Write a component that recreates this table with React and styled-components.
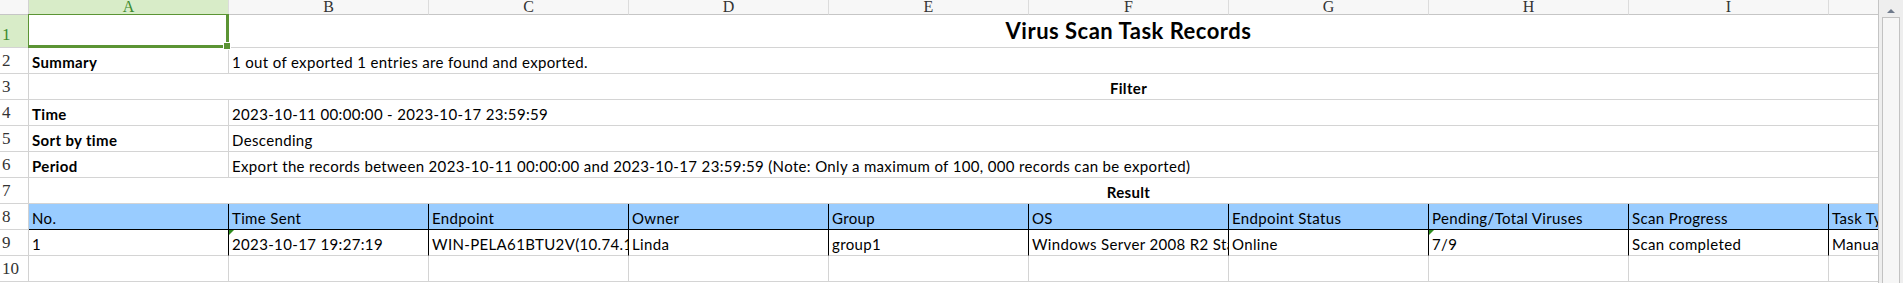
import styled, { createGlobalStyle, css } from "styled-components";

const columns = ["A", "B", "C", "D", "E", "F", "G", "H", "I", "J", "K"];

const resultHead = [
  "No.",
  "Time Sent",
  "Endpoint",
  "Owner",
  "Group",
  "OS",
  "Endpoint Status",
  "Pending/Total Viruses",
  "Scan Progress",
  "Task Type",
  "Operator",
];

const resultRow = [
  { text: "1" },
  { text: "2023-10-17 19:27:19", marker: true },
  { text: "WIN-PELA61BTU2V(10.74.102.36)" },
  { text: "Linda" },
  { text: "group1" },
  { text: "Windows Server 2008 R2 Standard" },
  { text: "Online" },
  { text: "7/9", marker: true },
  { text: "Scan completed" },
  { text: "Manual scan" },
  { text: "" },
];

const filters = [
  { row: 4, label: "Time", value: "2023-10-11 00:00:00 - 2023-10-17 23:59:59" },
  { row: 5, label: "Sort by time", value: "Descending" },
  {
    row: 6,
    label: "Period",
    value:
      "Export the records between 2023-10-11 00:00:00 and 2023-10-17 23:59:59 (Note: Only a maximum of 100, 000 records can be exported)",
  },
];

const GlobalStyle = createGlobalStyle`
  html, body {
    margin: 0;
    padding: 0;
    background: #ffffff;
    overflow: hidden;
  }
`;

const Window = styled.div`
  display: flex;
  width: 1903px;
  height: 283px;
  overflow: hidden;
`;

const SheetArea = styled.div`
  flex: 1;
  min-width: 0;
  overflow: hidden;
  position: relative;
`;

const Grid = styled.div`
  display: grid;
  grid-template-columns: 29px repeat(11, 200px);
  grid-template-rows: 15px 33px repeat(10, 26px);
  width: max-content;
  position: relative;
`;

const Corner = styled.div`
  background: #f7f7f7;
  border-right: 1px solid #d2d2d2;
  border-bottom: 1px solid #c6c6c6;
  box-sizing: border-box;
`;

const ColHead = styled.div`
  box-sizing: border-box;
  background: ${(p) => (p.$active ? "#d8ecc8" : "#f7f7f7")};
  border-right: 1px solid #dcdcdc;
  border-bottom: 1px solid #c6c6c6;
  color: ${(p) => (p.$active ? "#3d8a2e" : "#333333")};
  font-family: "Liberation Serif", "DejaVu Serif", serif;
  font-size: 16px;
  line-height: 11px;
  text-align: center;
  overflow: hidden;
  padding-top: 1px;
`;

const RowHead = styled.div`
  box-sizing: border-box;
  background: ${(p) => (p.$active ? "#d8ecc8" : "#ffffff")};
  border-right: 1px solid #d2d2d2;
  border-bottom: 1px solid #d4d4d4;
  color: ${(p) => (p.$active ? "#3d8a2e" : "#333333")};
  font-family: "Liberation Serif", "DejaVu Serif", serif;
  font-size: 17px;
  display: flex;
  align-items: flex-end;
  padding: 0 0 3px 2px;
  line-height: 18px;
`;

const edgeStyles = css`
  border-right-color: #000000;
`;

const Cell = styled.div`
  position: relative;
  box-sizing: border-box;
  grid-column: ${(p) => (p.$span ? `span ${p.$span}` : "auto")};
  display: flex;
  align-items: flex-end;
  justify-content: ${(p) => (p.$center ? "center" : "flex-start")};
  padding: 0 3px ${(p) => (p.$title ? "3px" : "2px")};
  background: ${(p) => p.$fill || "transparent"};
  border-right: 1px solid #d4d4d4;
  border-bottom: 1px solid ${(p) => (p.$underline ? "#000000" : "#d4d4d4")};
  ${(p) => p.$edge && edgeStyles};
  font-family: Lato, "Open Sans", "Liberation Sans", sans-serif;
  font-size: ${(p) => (p.$title ? "22px" : "15px")};
  letter-spacing: ${(p) => (p.$title ? "0.5px" : "0.35px")};
  font-weight: ${(p) => (p.$bold ? 700 : 400)};
  line-height: ${(p) => (p.$title ? "26px" : "18px")};
  color: #000000;
  white-space: nowrap;
  overflow: hidden;

  ${(p) =>
    p.$marker &&
    css`
      &::before {
        content: "";
        position: absolute;
        left: 0;
        top: 0;
        border-top: 5px solid #2e8b1e;
        border-right: 5px solid transparent;
      }
    `}
`;

const Selection = styled.div`
  position: absolute;
  left: 28px;
  top: 14px;
  width: 201px;
  height: 34px;
  box-sizing: border-box;
  border-left: 1px solid #5b9434;
  border-top: 1px solid #5b9434;
  border-right: 3px solid #5b9434;
  border-bottom: 3px solid #5b9434;
  pointer-events: none;

  &::after {
    content: "";
    position: absolute;
    right: -5px;
    bottom: -5px;
    width: 6px;
    height: 6px;
    background: #5b9434;
    border: 1px solid #ffffff;
  }
`;

const Scrollbar = styled.div`
  width: 25px;
  flex-shrink: 0;
  box-sizing: border-box;
  background: #eeeeee;
  border-left: 1px solid #c4c4c4;
  display: flex;
  flex-direction: column;
  align-items: center;
  padding-top: 9px;
  gap: 4px;
`;

const ArrowUp = styled.div`
  width: 0;
  height: 0;
  border-left: 4px solid transparent;
  border-right: 4px solid transparent;
  border-bottom: 4px solid #6f7a8c;
`;

const Thumb = styled.div`
  width: 18px;
  flex: 1;
  box-sizing: border-box;
  background: #f6f6f6;
  border: 1px solid #c2c2c2;
  border-bottom: none;
`;

const Label = ({ children }) => <Cell $bold>{children}</Cell>;

const Value = ({ children }) => <Cell $span={10}>{children}</Cell>;

const Heading = ({ children }) => (
  <Cell $span={11} $center $bold>
    {children}
  </Cell>
);

function Row({ n, label, value }) {
  return (
    <>
      <RowHead>{n}</RowHead>
      <Label>{label}</Label>
      <Value>{value}</Value>
    </>
  );
}

export default function App() {
  return (
    <>
      <GlobalStyle />
      <Window>
        <SheetArea>
          <Grid>
            <Corner />
            {columns.map((c) => (
              <ColHead key={c} $active={c === "A"}>
                {c}
              </ColHead>
            ))}

            <RowHead $active>1</RowHead>
            <Cell $span={11} $center $bold $title>
              Virus Scan Task Records
            </Cell>

            <RowHead>2</RowHead>
            <Label>Summary</Label>
            <Value>1 out of exported 1 entries are found and exported.</Value>

            <RowHead>3</RowHead>
            <Heading>Filter</Heading>

            {filters.map((f) => (
              <Row key={f.row} n={f.row} label={f.label} value={f.value} />
            ))}

            <RowHead>7</RowHead>
            <Heading>Result</Heading>

            <RowHead>8</RowHead>
            {resultHead.map((h) => (
              <Cell key={h} $fill="#99ccff" $edge $underline>
                {h}
              </Cell>
            ))}

            <RowHead>9</RowHead>
            {resultRow.map((c, i) => (
              <Cell key={i} $edge $marker={c.marker}>
                {c.text}
              </Cell>
            ))}

            <RowHead>10</RowHead>
            {columns.map((c) => (
              <Cell key={c} />
            ))}

            <Selection />
          </Grid>
        </SheetArea>
        <Scrollbar>
          <ArrowUp />
          <Thumb />
        </Scrollbar>
      </Window>
    </>
  );
}
